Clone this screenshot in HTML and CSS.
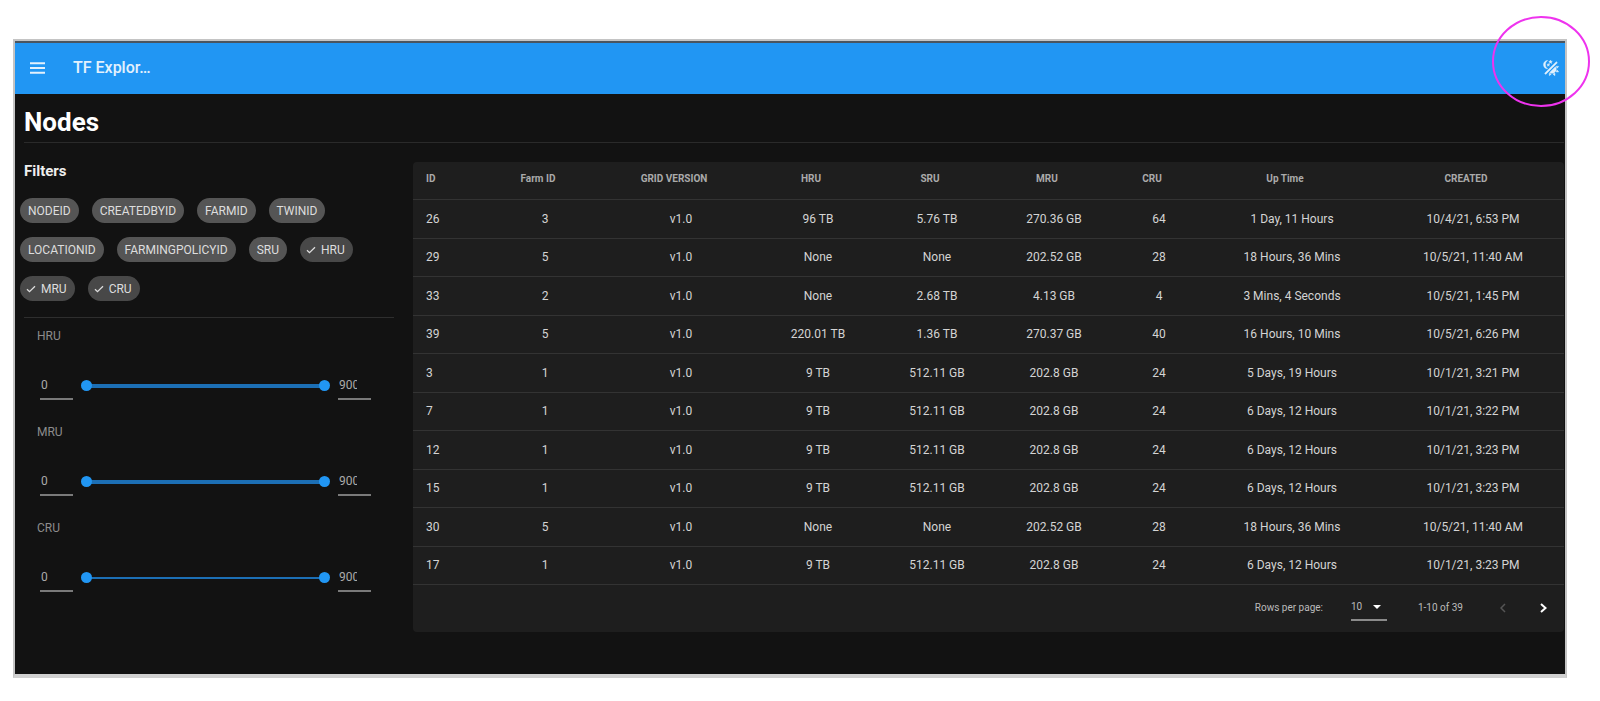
FILE: index.html
```html
<!DOCTYPE html>
<html lang="en">
<head>
<meta charset="utf-8">
<title>TF Explorer</title>
<link rel="stylesheet" href="styles.css">
</head>
<body>
<div class="app">
  <header class="bar">
    <button class="icon-btn" aria-label="Menu">
      <svg width="15" height="12" viewBox="0 0 15 12"><path d="M0 1.300h15M0 6h15M0 10.700h15" stroke="currentColor" stroke-width="2"/></svg>
    </button>
    <div class="brand">TF Explor…</div>
    <button class="icon-btn theme-btn" aria-label="Toggle theme">
      <svg width="18" height="18" viewBox="0 0 24 24" fill="currentColor" stroke="currentColor" stroke-width="0.600"><path d="M7.5 2c-1.79 1.15-3 3.18-3 5.5s1.21 4.35 3.03 5.5C4.46 13 2 10.54 2 7.5A5.5 5.5 0 0 1 7.5 2m11.57 1.500l1.43 1.430L4.930 20.500 3.500 19.070 19.070 3.500m-6.180 2.430L11.410 5 9.970 6l.420-1.700L9 3.240l1.750-.120.580-1.650L12 3.100l1.730.030-1.350 1.130.510 1.670m-3.300 3.610l-1.160-.730-1.120.780.340-1.320-1.090-.830 1.360-.090.450-1.290.510 1.270 1.360.030-1.050.870.400 1.310M19 13.500a5.500 5.500 0 0 1-5.500 5.500c-1.220 0-2.350-.400-3.260-1.070l7.690-7.690c.670.910 1.070 2.040 1.070 3.260m-4.400 6.580l2.770-1.150-.240 3.350-2.530-2.200m4.330-2.700l1.150-2.770 2.200 2.540-3.350.230m1.150-4.960l-1.140-2.780 3.340.240-2.200 2.540M9.630 18.930l2.770 1.150-2.530 2.190-.240-3.340z"/></svg>
    </button>
  </header>
  <main class="page">
    <h1 class="title">Nodes</h1>
    <div class="columns">
      <aside class="filters">
        <h2 class="subtitle">Filters</h2>
        <div class="chips">
          <button class="chip">NODEID</button><button class="chip">CREATEDBYID</button><button class="chip">FARMID</button><button class="chip">TWINID</button>
          <button class="chip">LOCATIONID</button><button class="chip">FARMINGPOLICYID</button><button class="chip">SRU</button>
          <button class="chip on"><svg class="tick" viewBox="0 0 10 8"><path d="M1 4.200l2.500 2.500L9 1.200"/></svg>HRU</button>
          <button class="chip on"><svg class="tick" viewBox="0 0 10 8"><path d="M1 4.200l2.500 2.500L9 1.200"/></svg>MRU</button>
          <button class="chip on"><svg class="tick" viewBox="0 0 10 8"><path d="M1 4.200l2.500 2.500L9 1.200"/></svg>CRU</button>
        </div>
        <hr class="rule">
        <fieldset class="range"><legend>HRU</legend>
          <div class="range-row"><input class="num" type="text" value="0" aria-label="HRU minimum"><div class="slider"><input type="range" min="0" max="900" value="0" aria-label="HRU from"><input type="range" min="0" max="900" value="900" aria-label="HRU to"></div><input class="num" type="text" value="900" aria-label="HRU maximum"></div>
        </fieldset>
        <fieldset class="range"><legend>MRU</legend>
          <div class="range-row"><input class="num" type="text" value="0" aria-label="MRU minimum"><div class="slider"><input type="range" min="0" max="900" value="0" aria-label="MRU from"><input type="range" min="0" max="900" value="900" aria-label="MRU to"></div><input class="num" type="text" value="900" aria-label="MRU maximum"></div>
        </fieldset>
        <fieldset class="range"><legend>CRU</legend>
          <div class="range-row"><input class="num" type="text" value="0" aria-label="CRU minimum"><div class="slider thin"><input type="range" min="0" max="900" value="0" aria-label="CRU from"><input type="range" min="0" max="900" value="900" aria-label="CRU to"></div><input class="num" type="text" value="900" aria-label="CRU maximum"></div>
        </fieldset>
      </aside>
      <section class="card">
        <table class="nodes">
          <colgroup><col class="c-id"><col class="c-farm"><col class="c-grid"><col class="c-hru"><col class="c-sru"><col class="c-mru"><col class="c-cru"><col class="c-up"><col class="c-created"></colgroup>
          <thead><tr><th>ID</th><th>Farm ID</th><th>GRID VERSION</th><th>HRU</th><th>SRU</th><th>MRU</th><th>CRU</th><th>Up Time</th><th>CREATED</th></tr></thead>
          <tbody>
            <tr><td>26</td><td>3</td><td>v1.0</td><td>96 TB</td><td>5.76 TB</td><td>270.36 GB</td><td>64</td><td>1 Day, 11 Hours</td><td>10/4/21, 6:53 PM</td></tr>
            <tr><td>29</td><td>5</td><td>v1.0</td><td>None</td><td>None</td><td>202.52 GB</td><td>28</td><td>18 Hours, 36 Mins</td><td>10/5/21, 11:40 AM</td></tr>
            <tr><td>33</td><td>2</td><td>v1.0</td><td>None</td><td>2.68 TB</td><td>4.13 GB</td><td>4</td><td>3 Mins, 4 Seconds</td><td>10/5/21, 1:45 PM</td></tr>
            <tr><td>39</td><td>5</td><td>v1.0</td><td>220.01 TB</td><td>1.36 TB</td><td>270.37 GB</td><td>40</td><td>16 Hours, 10 Mins</td><td>10/5/21, 6:26 PM</td></tr>
            <tr><td>3</td><td>1</td><td>v1.0</td><td>9 TB</td><td>512.11 GB</td><td>202.8 GB</td><td>24</td><td>5 Days, 19 Hours</td><td>10/1/21, 3:21 PM</td></tr>
            <tr><td>7</td><td>1</td><td>v1.0</td><td>9 TB</td><td>512.11 GB</td><td>202.8 GB</td><td>24</td><td>6 Days, 12 Hours</td><td>10/1/21, 3:22 PM</td></tr>
            <tr><td>12</td><td>1</td><td>v1.0</td><td>9 TB</td><td>512.11 GB</td><td>202.8 GB</td><td>24</td><td>6 Days, 12 Hours</td><td>10/1/21, 3:23 PM</td></tr>
            <tr><td>15</td><td>1</td><td>v1.0</td><td>9 TB</td><td>512.11 GB</td><td>202.8 GB</td><td>24</td><td>6 Days, 12 Hours</td><td>10/1/21, 3:23 PM</td></tr>
            <tr><td>30</td><td>5</td><td>v1.0</td><td>None</td><td>None</td><td>202.52 GB</td><td>28</td><td>18 Hours, 36 Mins</td><td>10/5/21, 11:40 AM</td></tr>
            <tr><td>17</td><td>1</td><td>v1.0</td><td>9 TB</td><td>512.11 GB</td><td>202.8 GB</td><td>24</td><td>6 Days, 12 Hours</td><td>10/1/21, 3:23 PM</td></tr>
          </tbody>
        </table>
        <div class="pager">
          <label for="rows">Rows per page:</label>
          <div class="select-wrap">
            <select id="rows"><option>10</option><option>20</option></select>
            <svg class="caret" viewBox="0 0 8 4"><path d="M0 0h8l-4 4z" fill="currentColor"/></svg>
          </div>
          <span class="count">1-10 of 39</span>
          <button class="icon-btn" disabled aria-label="Previous page"><svg width="6" height="10" viewBox="0 0 6 10"><path d="M5 1L1 5l4 4" fill="none" stroke="currentColor" stroke-width="1.500"/></svg></button>
          <button class="icon-btn next" aria-label="Next page"><svg width="7" height="10" viewBox="0 0 7 10"><path d="M1 1l4.500 4L1 9" fill="none" stroke="currentColor" stroke-width="2"/></svg></button>
        </div>
      </section>
    </div>
  </main>
</div>
<svg class="marker" viewBox="0 0 98 91" aria-hidden="true"><ellipse cx="49" cy="45.500" rx="48" ry="44.500"/></svg>
</body>
</html>
```
FILE: styles.css
```css
* { box-sizing: border-box; }
body { margin: 0; padding: 39px 33px 22px 13px; background: #fff; color: #fff; font-family: Roboto, "Liberation Sans", sans-serif; font-size: 12px; line-height: 16px; }
button, input, select { font: inherit; color: inherit; }
.app { border: 2px solid #c4c4c4; border-bottom: 4px solid #d0d0d0; background: #121212; }
.bar { display: flex; align-items: center; height: 53px; padding: 0 5px 2px 15px; border-top: 2px solid #4a5560; background: #2196f3; color: #e3f1fd; }
.icon-btn { display: flex; padding: 0; border: 0; background: none; cursor: pointer; }
.brand { margin-left: 28px; font-size: 16px; line-height: 24px; font-weight: 500; white-space: nowrap; }
.theme-btn { margin-left: auto; }
.page { padding: 12px 1px 42px 0; }
.title { margin: 0 0 19px 9px; padding-bottom: 4px; border-bottom: 1px solid #2a2a2a; font-size: 26px; line-height: 32px; }
.columns { display: flex; align-items: flex-start; }
.filters { flex: none; width: 398px; padding: 0 19px 0 5px; }
.subtitle { margin: 0 0 18px 4px; font-size: 15px; line-height: 18px; color: #eee; }
.chips { display: flex; flex-wrap: wrap; gap: 14px 13px; }
.chip { display: flex; align-items: center; height: 25px; padding: 0 8px; border: 0; border-radius: 13px; background: #555; color: #ddd; }
.chip.on { padding: 0 8px 0 6px; background: #484848; }
.tick { width: 10px; height: 8px; margin-right: 5px; fill: none; stroke: currentColor; stroke-width: 1.300; }
.rule { margin: 16px 0 10px 4px; border: 0; border-top: 1px solid #2e2e2e; }
.range { margin: 0 0 0 4px; padding: 0 23px 24px 13px; border: 0; color: #8c8c8c; }
.range legend { padding: 0; }
.range-row { display: flex; align-items: center; gap: 8px; padding: 27px 0 0 3px; }
.num { width: 33px; height: 29px; padding: 0 14px 0 1px; border: 0; border-bottom: 2px solid #7a7a7a; background: none; color: #aaa; outline: 0; }
.slider { display: grid; flex: 1; align-items: center; background: linear-gradient(#1c6fb5, #1c6fb5) center / calc(100% - 12px) 4px no-repeat; }
.slider.thin { background-size: calc(100% - 12px) 2px; }
.slider input { grid-area: 1 / 1; width: 100%; height: 12px; margin: 0; appearance: none; background: none; pointer-events: none; }
.slider input::-webkit-slider-thumb { width: 11px; height: 11px; appearance: none; border-radius: 50%; background: #2196f3; pointer-events: auto; }
.card { flex: 1; border-radius: 4px; background: #1e1e1e; }
.nodes { width: 100%; border-collapse: collapse; table-layout: fixed; color: #d4d4d4; }
.c-id { width: 69px; }
.c-farm { width: 126px; }
.c-grid { width: 146px; }
.c-hru { width: 128px; }
.c-sru { width: 110px; }
.c-mru { width: 124px; }
.c-cru { width: 86px; }
.c-up { width: 180px; }
.c-created { width: 182px; }
.nodes th, .nodes td { padding: 0; border-bottom: 1px solid #333; text-align: center; white-space: nowrap; }
.nodes th { height: 37px; padding: 0 14px 3px 0; font-size: 10px; line-height: 12px; color: #aaa; }
.nodes td { height: 38px; }
.nodes tr:nth-child(odd) td { height: 39px; }
.nodes th:first-child, .nodes td:first-child { padding-left: 13px; text-align: left; }
.pager { display: flex; align-items: center; height: 47px; padding-right: 17px; font-size: 10px; color: #bbb; }
.pager label { margin-left: auto; }
.select-wrap { display: flex; align-items: center; width: 36px; height: 26px; margin-left: 28px; border-bottom: 2px solid #8a8a8a; }
.select-wrap select { width: 100%; padding: 0 12px 0 0; border: 0; background: none; appearance: none; outline: 0; }
.caret { flex: none; width: 8px; height: 4px; margin: 0 6px 0 -14px; color: #fff; pointer-events: none; }
.count { margin: 0 37px 0 31px; }
.pager .icon-btn:disabled { color: #555; }
.next { margin-left: 34px; color: #fff; }
.marker { position: absolute; top: 16px; right: 10px; width: 98px; height: 91px; fill: none; stroke: #ee33ee; stroke-width: 2; pointer-events: none; }
```
